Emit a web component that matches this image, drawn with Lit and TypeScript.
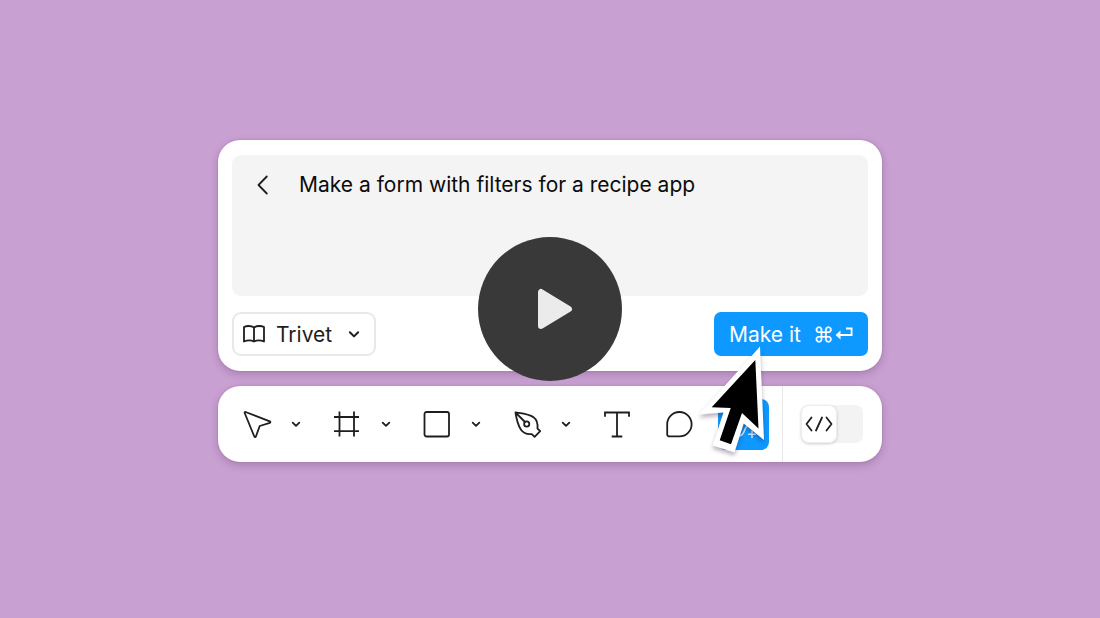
import { LitElement, html, css, svg } from "lit";
import { customElement, state } from "lit/decorators.js";

const chevron = html`<svg class="chevron" viewBox="0 0 16 16" aria-hidden="true">
  <path d="M4.700 6.600 8 9.900l3.300-3.300" />
</svg>`;

const icons = {
  move: svg`<path d="M4.600 4 28.800 13.400c.8.300.8 1.100 0 1.400L18.700 18 14.900 28.500c-.3.800-1.300.8-1.600 0L3.700 5c-.3-.700.2-1.200.9-1Z" />`,
  frame: svg`<path d="M8.500 3.500v25M23 3.500v25M3 9h25M3 23.200h25" />`,
  shape: svg`<rect x="3.500" y="4" width="24.500" height="24.500" rx="2" />`,
  pen: svg`<path d="M4.500 4.500C11 5.500 18 6 22.500 9.200c3.800 2.800 4.500 6.500 4 11.300l2.700 2.600-5.600 5.700-2.800-2.700c-5 .6-8.400-.9-10.800-4.300C7 17.500 5.500 11 4.500 4.500Zm0 0 9.500 9.500" /><circle cx="15.700" cy="16" r="2.600" />`,
  text: svg`<path d="M4 8.800V4.500h24v4.300M16 4.500v24M10.700 28.500h10.600" />`,
  comment: svg`<path d="M15.400 4a12.200 12.200 0 1 1 0 24.400H5.200a2 2 0 0 1-2-2V16.200A12.200 12.200 0 0 1 15.400 4Z" />`,
};

@customElement("app-root")
export class AppRoot extends LitElement {
  @state() private prompt = "Make a form with filters for a recipe app";

  static styles = css`
    :host {
      display: block;
      font-family: Inter, sans-serif;
      color: #1e1e1e;
    }
    * {
      box-sizing: border-box;
    }
    button {
      margin: 0;
      padding: 0;
      border: 0;
      background: none;
      font: inherit;
      color: inherit;
      cursor: pointer;
    }
    svg {
      display: block;
      flex: none;
      fill: none;
      stroke: currentColor;
      stroke-width: 1.8;
      stroke-linecap: round;
      stroke-linejoin: round;
    }
    .stage {
      position: relative;
      display: flex;
      flex-direction: column;
      justify-content: center;
      align-items: center;
      gap: 15px;
      min-height: 100vh;
      padding: 16px 16px 32px;
      background: #c9a0d2;
      overflow: hidden;
    }
    .panel,
    .toolbar {
      width: 100%;
      max-width: 664px;
      background: #fff;
      border-radius: 22px;
      box-shadow: 0 3px 8px rgba(60, 20, 70, 0.24), 0 0 2px rgba(60, 20, 70, 0.16);
    }
    .panel {
      display: flex;
      flex-direction: column;
      gap: 16px;
      padding: 15px 14px 15px;
    }
    .field {
      display: flex;
      align-items: flex-start;
      gap: 23px;
      padding: 14px 20px;
      border-radius: 9px;
      background: #f4f4f4;
    }
    .back {
      padding: 4px 0;
    }
    .back svg {
      width: 24px;
      height: 24px;
    }
    .prompt {
      flex: 1;
      min-width: 0;
      height: 113px;
      padding: 0;
      border: 0;
      outline: 0;
      resize: none;
      background: none;
      color: #0c0c0c;
      font: 400 21px/32px Inter, sans-serif;
    }
    .actions {
      display: flex;
      justify-content: space-between;
      align-items: center;
      font-size: 21px;
      line-height: 29px;
    }
    .library {
      display: flex;
      align-items: center;
      height: 44px;
      padding: 0 10px 0 8px;
      border: 2px solid #e8e8e8;
      border-radius: 9px;
    }
    .library .name {
      margin: 0 12px 0 10px;
    }
    .library .chevron {
      width: 20px;
      height: 20px;
      stroke-width: 1.6;
    }
    .book {
      width: 24px;
      height: 24px;
    }
    .make {
      display: flex;
      align-items: center;
      gap: 12px;
      height: 44px;
      padding: 0 14px 0 15px;
      border-radius: 7px;
      background: #0d99ff;
      color: #fff;
    }
    .keys {
      display: flex;
      align-items: center;
    }
    .keys svg {
      width: 20px;
      height: 20px;
      stroke-linecap: butt;
      stroke-linejoin: miter;
    }
    .toolbar {
      display: flex;
      align-items: center;
      height: 76px;
      padding: 0 19px 0 23px;
    }
    .group {
      display: flex;
      align-items: center;
      gap: 15px;
      margin-right: 27px;
    }
    .icon {
      width: 32px;
      height: 32px;
    }
    .square {
      stroke-linecap: butt;
      stroke-linejoin: miter;
    }
    .group .chevron {
      width: 16px;
      height: 16px;
    }
    .comment {
      margin: 0 22px 0 31px;
    }
    .assist {
      position: relative;
      display: flex;
    }
    .ai {
      width: 51px;
      height: 51px;
      display: grid;
      place-items: center;
      border-radius: 8px;
      background: #0d99ff;
      color: #d9ecff;
    }
    .ai svg {
      stroke-width: 1.500;
    }
    .pointer {
      position: absolute;
      left: -21px;
      top: -55px;
      width: 72px;
      height: 114px;
      stroke: none;
      filter: drop-shadow(0 3px 2px rgba(40, 10, 50, 0.32));
      pointer-events: none;
    }
    .mode {
      display: flex;
      align-self: stretch;
      align-items: center;
      flex: 1;
      justify-content: flex-end;
      margin-left: 13px;
      border-left: 1px solid #e6e6e6;
    }
    .switch {
      display: flex;
      width: 62px;
      height: 38px;
      border-radius: 8px;
      background: #f3f3f3;
    }
    .thumb {
      display: grid;
      place-items: center;
      width: 36px;
      height: 38px;
      border-radius: 8px;
      background: #fff;
      box-shadow: 0 1px 3px rgba(0, 0, 0, 0.2), inset 0 0 0 1px #ededed;
    }
    .play {
      position: absolute;
      top: 50%;
      left: 50%;
      width: 144px;
      height: 144px;
      transform: translate(-50%, -50%);
      display: grid;
      place-items: center;
      border-radius: 50%;
      background: #393939;
      color: #ebebeb;
    }
    .play svg {
      width: 48px;
      height: 48px;
      fill: currentColor;
      stroke-width: 6;
    }
  `;

  private tool(label: string, shape: unknown, square = false) {
    return html`<div class="group">
      <button type="button" aria-label=${label}>
        <svg class=${square ? "icon square" : "icon"} viewBox="0 0 32 32">${shape}</svg>
      </button>
      <button type="button" aria-label="${label} options">${chevron}</button>
    </div>`;
  }

  render() {
    return html`<main class="stage">
      <section class="panel">
        <div class="field">
          <button class="back" type="button" aria-label="Back">
            <svg viewBox="0 0 24 24"><path d="M14.800 3.500 6.500 12l8.300 8.500" /></svg>
          </button>
          <textarea
            class="prompt"
            aria-label="Prompt"
            spellcheck="false"
            .value=${this.prompt}
            @input=${(e: Event) => (this.prompt = (e.target as HTMLTextAreaElement).value)}
          ></textarea>
        </div>
        <div class="actions">
          <button class="library" type="button" aria-haspopup="listbox">
            <svg class="book" viewBox="0 0 24 24">
              <path d="M12 5.500C10.500 4.300 8.500 4 6.500 4S3 4.500 2 5v14.500c3-1.300 7-1.500 10 0 3-1.500 7-1.300 10 0V5c-1-.5-2.500-1-4.500-1s-4 .3-5.500 1.500Zm0 0v14" />
            </svg>
            <span class="name">Trivet</span>
            ${chevron}
          </button>
          <button class="make" type="button">
            <span>Make it</span>
            <span class="keys">
              <span>⌘</span>
              <svg viewBox="0 0 20 20">
                <path d="M12 4.500h5.600V11H5" />
                <path d="M6.500 6.500 1.500 11l5 4.500Z" fill="currentColor" stroke="none" />
              </svg>
            </span>
          </button>
        </div>
      </section>

      <nav class="toolbar" aria-label="Tools">
        ${this.tool("Move", icons.move)} ${this.tool("Frame", icons.frame, true)}
        ${this.tool("Shape", icons.shape)} ${this.tool("Pen", icons.pen)}
        <button type="button" aria-label="Text">
          <svg class="icon square" viewBox="0 0 32 32">${icons.text}</svg>
        </button>
        <button class="comment" type="button" aria-label="Comment">
          <svg class="icon" viewBox="0 0 32 32">${icons.comment}</svg>
        </button>
        <div class="assist">
          <button class="ai" type="button" aria-label="Actions">
            <svg class="icon" viewBox="0 0 32 32">
              <path d="M11 28c7 0 4-10 10-10.500" />
              <path d="M24 23v6.500M20.700 26.200h6.600" />
            </svg>
          </button>
          <svg class="pointer" viewBox="0 0 72 114">
            <path fill="#fff" d="M63 2.500 2 70.500l24.500-2L15.500 101.500l22 7L46.700 79.500 67 96Z" />
            <path fill="#000" d="M58.300 16 14.700 63.300l19 .7L22.700 96.300l11.300 4L45 69l16.500 15.500Z" />
          </svg>
        </div>
        <div class="mode">
          <button class="switch" type="button" role="switch" aria-checked="false" aria-label="Dev mode">
            <span class="thumb">
              <svg class="icon" viewBox="0 0 32 32">
                <path d="M8.500 9.500 3.500 16l5 6.500M23.500 9.500l5 6.500-5 6.500M19 9.500l-6 13" />
              </svg>
            </span>
          </button>
        </div>
      </nav>

      <button class="play" type="button" aria-label="Play video">
        <svg viewBox="0 0 48 48"><path d="M15 7v34L43 24Z" /></svg>
      </button>
    </main>`;
  }
}
